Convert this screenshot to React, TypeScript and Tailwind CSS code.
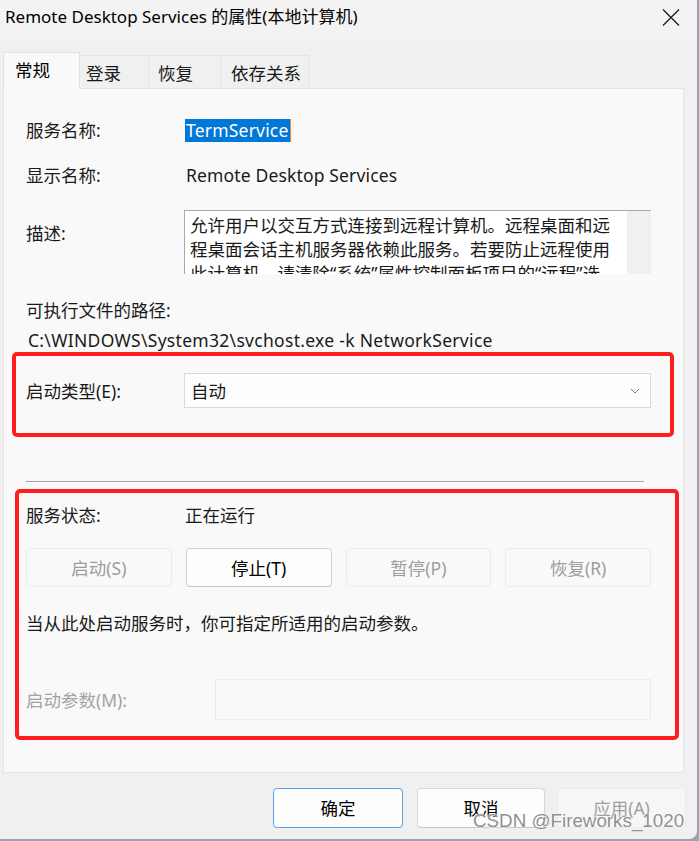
import React from "react";

const F = { fontFamily: '"Segoe UI", "Noto Sans", "Noto Sans CJK SC", sans-serif' };

function Chevron() {
  return (
    <svg width="10" height="6" viewBox="0 0 10 6" fill="none">
      <path d="M1 1 L5 5 L9 1" stroke="#7a7a7a" strokeWidth="1" />
    </svg>
  );
}

function CloseX() {
  return (
    <svg width="18" height="17" viewBox="0 0 18 17" fill="none">
      <path d="M1 0.5 L17 16.5 M17 0.5 L1 16.5" stroke="#1a1a1a" strokeWidth="1.3" />
    </svg>
  );
}

export default function App() {
  return (
    <div className="w-[699px] h-[841px] bg-[#9aa4b0] flex" style={F}>
      <div className="relative w-[697px] h-[839px] bg-[#f0f0f0] rounded-br-[8px] flex flex-col text-[17.5px] text-[#1a1a1a]">
        {/* Title bar */}
        <div className="h-[40px] bg-[#f3f3f3] flex items-start justify-between pl-[5px] pr-[17px]">
          <div className="pt-[5px] leading-[24px] text-[17px] text-black whitespace-nowrap">
            Remote Desktop Services 的属性(本地计算机)
          </div>
          <div className="pt-[9px]">
            <CloseX />
          </div>
        </div>

        {/* Tabs */}
        <div className="h-[48px] flex items-end pl-[3px]">
          <div className="relative z-10 w-[77px] h-[37px] mb-[-1px] bg-[#f9f9f9] border-t border-l border-r border-[#e2e2e2] pl-[11px] pt-[5px] leading-[24px] text-black">
            常规
          </div>
          <div className="w-[69px] h-[33px] border-t border-r border-[#e4e4e4] bg-[#f0f0f0] pl-[6px] pt-[5px] leading-[24px]">
            登录
          </div>
          <div className="w-[72px] h-[33px] border-t border-r border-[#e4e4e4] bg-[#f0f0f0] pl-[9px] pt-[5px] leading-[24px]">
            恢复
          </div>
          <div className="w-[88px] h-[33px] border-t border-r border-[#e4e4e4] bg-[#f0f0f0] pl-[10px] pt-[5px] leading-[24px]">
            依存关系
          </div>
        </div>

        {/* Panel */}
        <div className="ml-[3px] w-[681px] h-[685px] bg-[#f9f9f9] border border-[#e4e4e4] pl-[22px] pr-[32px] flex flex-col leading-[24px]">
          <div className="mt-[29px] flex items-center h-[24px]">
            <div className="w-[158px]">服务名称:</div>
            <div className="ml-[1px] bg-[#0078d7] text-white px-[1px] h-[23px] leading-[23px] border-r border-[#e8893a] tracking-[0.2px]">
              TermService
            </div>
          </div>
          <div className="mt-[21px] flex items-center h-[24px]">
            <div className="w-[160px]">显示名称:</div>
            <div className="tracking-[0.15px]">Remote Desktop Services</div>
          </div>
          <div className="mt-[23px] flex items-start">
            <div className="w-[158px] pt-[11px]">描述:</div>
            <div className="w-[467px] h-[64px] overflow-hidden flex border-t border-l border-[#a9a9a9] bg-white">
              <div className="flex-1 pl-[5px] pt-[2px] leading-[24px] whitespace-nowrap overflow-hidden">
                <div>允许用户以交互方式连接到远程计算机。远程桌面和远</div>
                <div>程桌面会话主机服务器依赖此服务。若要防止远程使用</div>
                <div>此计算机，请清除“系统”属性控制面板项目的“远程”选</div>
              </div>
              <div className="w-[24px] bg-[#f0f0f0]" />
            </div>
          </div>
          <div className="mt-[24px] h-[24px]">可执行文件的路径:</div>
          <div className="mt-[6px] h-[24px] pl-[2px] whitespace-nowrap tracking-[0.3px]">
            C:\WINDOWS\System32\svchost.exe -k NetworkService
          </div>

          {/* Red box 1 */}
          <div className="-ml-[14px] -mr-[23px] h-[85px] border-[4px] border-[#ff1d1d] rounded-[5px] pl-[10px] pr-[19px] pt-[17px] flex">
            <div className="w-[158px] h-[35px] flex items-center">启动类型(E):</div>
            <div className="flex-1 h-[35px] bg-[#fdfdfd] border border-[#d9d9d9] flex items-center justify-between pl-[6px] pr-[10px]">
              <span>自动</span>
              <Chevron />
            </div>
          </div>

          <div className="mt-[44px] mr-[7px] h-[2px] border-t border-[#a3a3a3] border-b border-b-[#fdfdfd]" />

          {/* Red box 2 */}
          <div className="mt-[6px] -ml-[11px] -mr-[28px] h-[251px] border-[4px] border-[#ff1d1d] rounded-[5px] pl-[7px] pr-[24px] pt-[10px] flex flex-col">
            <div className="flex h-[24px] items-center">
              <div className="w-[159px]">服务状态:</div>
              <div>正在运行</div>
            </div>
            <div className="mt-[21px] grid grid-cols-4 gap-[14px]">
              <div className="h-[39px] rounded-[4px] border border-[#ececec] bg-[#f9f9f9] flex items-center justify-center text-[#9d9d9d]">
                启动(S)
              </div>
              <div className="h-[39px] rounded-[4px] border border-[#d3d3d3] border-b-[#c4c4c4] bg-[#fdfdfd] flex items-center justify-center text-black">
                停止(T)
              </div>
              <div className="h-[39px] rounded-[4px] border border-[#ececec] bg-[#f9f9f9] flex items-center justify-center text-[#9d9d9d]">
                暂停(P)
              </div>
              <div className="h-[39px] rounded-[4px] border border-[#ececec] bg-[#f9f9f9] flex items-center justify-center text-[#9d9d9d]">
                恢复(R)
              </div>
            </div>
            <div className="mt-[24px] h-[24px] whitespace-nowrap">当从此处启动服务时，你可指定所适用的启动参数。</div>
            <div className="mt-[44px] flex items-center">
              <div className="w-[189px] text-[#a3a3a3]">启动参数(M):</div>
              <div className="flex-1 h-[41px] border border-[#ebebeb] bg-[#f9f9f9]" />
            </div>
          </div>
        </div>

        {/* Footer buttons */}
        <div className="mt-[15px] flex justify-end pr-[11px]">
          <div className="w-[130px] h-[40px] rounded-[4px] border border-[#5a9fe0] bg-[#fdfdfd] flex items-center justify-center text-black">
            确定
          </div>
          <div className="ml-[14px] w-[128px] h-[40px] rounded-[4px] border border-[#d6d6d6] border-b-[#c6c6c6] bg-[#fdfdfd] flex items-center justify-center text-black">
            取消
          </div>
          <div className="ml-[12px] w-[129px] h-[40px] rounded-[4px] border border-[#ececec] bg-[#f6f6f6] flex items-center justify-center text-[#a0a0a0]">
            应用(A)
          </div>
        </div>

        {/* Watermark */}
        <div
          className="absolute left-[473px] top-[809px] text-[18.8px] leading-[24px] text-[#909090] whitespace-nowrap"
          style={{ fontFamily: '"Liberation Sans", Arial, sans-serif', textShadow: "0 0 2px #ffffff, 0 0 1px #ffffff" }}
        >
          CSDN @Fireworks_1020
        </div>
      </div>
    </div>
  );
}
